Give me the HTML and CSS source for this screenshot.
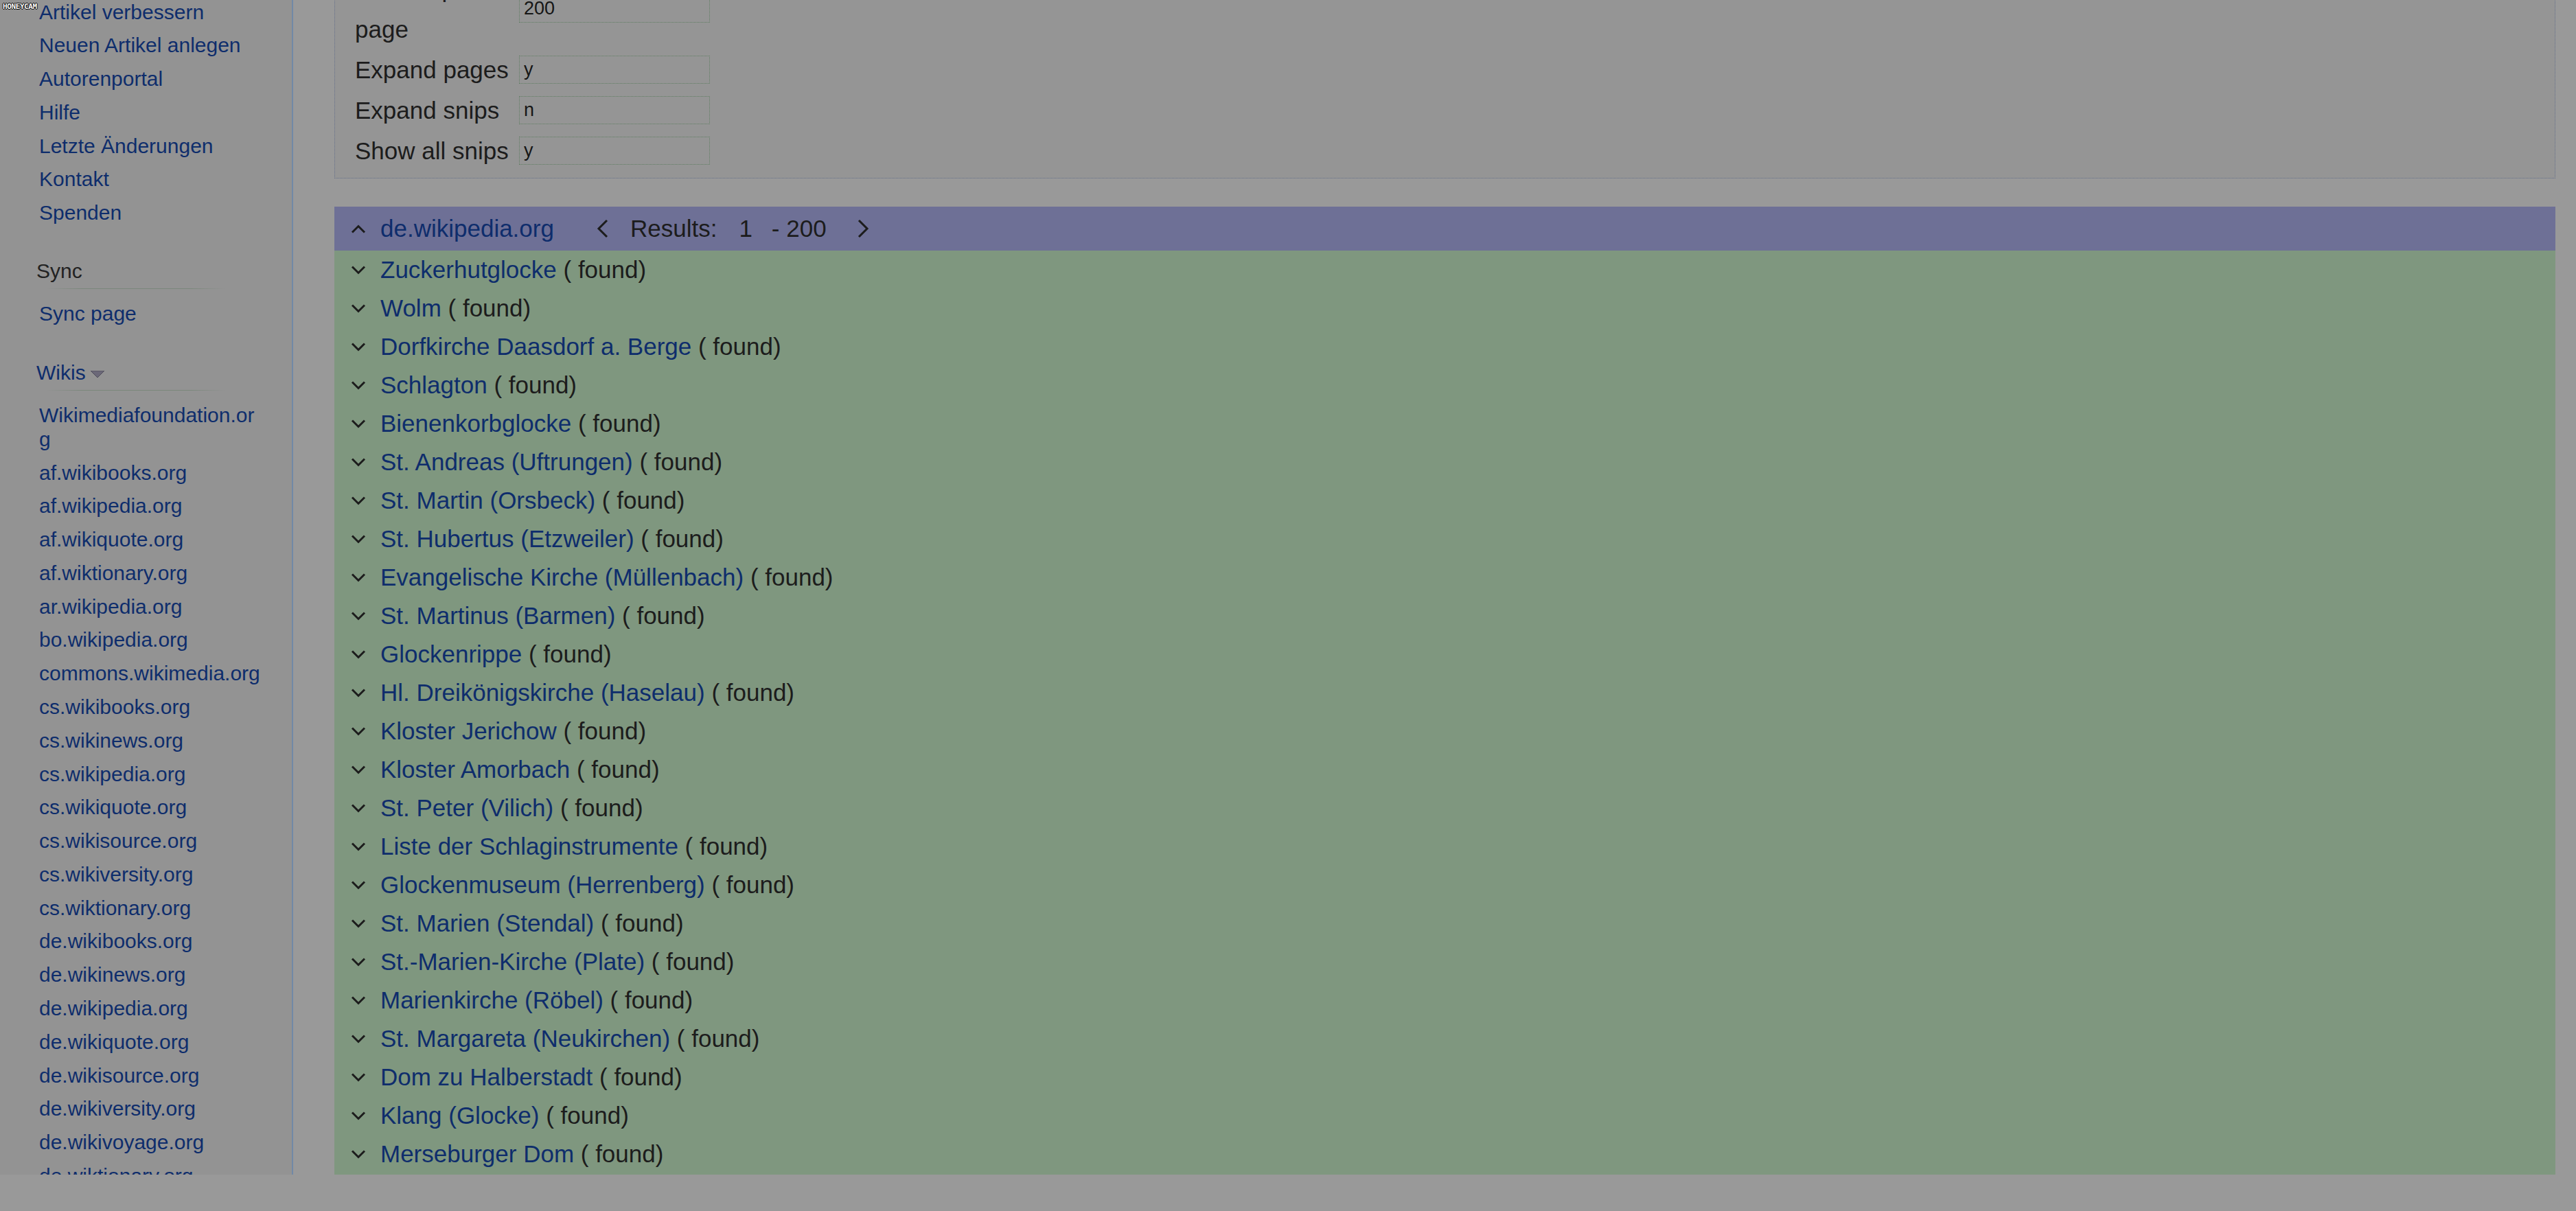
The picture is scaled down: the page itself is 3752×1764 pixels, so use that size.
FILE: index.html
```html
<!DOCTYPE html>
<html lang="de">
<head>
    <meta charset="UTF-8">
    <meta name="viewport" content="width=device-width, initial-scale=1.0">
    <title>Snips - Sync</title>
    <link rel="stylesheet" href="styles.css">
</head>
<body>
    <span class="watermark">HONEYCAM</span>
    <div class="page">
        <div class="sidebar">
            <ul class="nav-list first">
                <li><a href="#">Artikel verbessern</a></li>
                <li><a href="#">Neuen Artikel anlegen</a></li>
                <li><a href="#">Autorenportal</a></li>
                <li><a href="#">Hilfe</a></li>
                <li><a href="#">Letzte Änderungen</a></li>
                <li><a href="#">Kontakt</a></li>
                <li><a href="#">Spenden</a></li>
            </ul>
            <div class="portal">
                <h3>Sync</h3>
                <ul class="nav-list">
                    <li><a href="#">Sync page</a></li>
                </ul>
            </div>
            <div class="portal">
                <h3><a href="#">Wikis</a><svg class="drop" width="20" height="10" viewBox="0 0 20 10"><polygon points="0,0 20,0 10,10" fill="#6b6878" stroke="#4e4c5a" stroke-width="1"/></svg></h3>
                <ul class="nav-list">
                    <li><a href="#">Wikimediafoundation.org</a></li>
                    <li><a href="#">af.wikibooks.org</a></li>
                    <li><a href="#">af.wikipedia.org</a></li>
                    <li><a href="#">af.wikiquote.org</a></li>
                    <li><a href="#">af.wiktionary.org</a></li>
                    <li><a href="#">ar.wikipedia.org</a></li>
                    <li><a href="#">bo.wikipedia.org</a></li>
                    <li><a href="#">commons.wikimedia.org</a></li>
                    <li><a href="#">cs.wikibooks.org</a></li>
                    <li><a href="#">cs.wikinews.org</a></li>
                    <li><a href="#">cs.wikipedia.org</a></li>
                    <li><a href="#">cs.wikiquote.org</a></li>
                    <li><a href="#">cs.wikisource.org</a></li>
                    <li><a href="#">cs.wikiversity.org</a></li>
                    <li><a href="#">cs.wiktionary.org</a></li>
                    <li><a href="#">de.wikibooks.org</a></li>
                    <li><a href="#">de.wikinews.org</a></li>
                    <li><a href="#">de.wikipedia.org</a></li>
                    <li><a href="#">de.wikiquote.org</a></li>
                    <li><a href="#">de.wikisource.org</a></li>
                    <li><a href="#">de.wikiversity.org</a></li>
                    <li><a href="#">de.wikivoyage.org</a></li>
                    <li><a href="#">de.wiktionary.org</a></li>
                </ul>
            </div>
        </div>

        <div class="main">
            <div class="options">
                <table>
                    <tr>
                        <td class="label">Results per page</td>
                        <td><input type="text" value="200"></td>
                    </tr>
                    <tr>
                        <td class="label">Expand pages</td>
                        <td><input type="text" value="y"></td>
                    </tr>
                    <tr>
                        <td class="label">Expand snips</td>
                        <td><input type="text" value="n"></td>
                    </tr>
                    <tr>
                        <td class="label">Show all snips</td>
                        <td><input type="text" value="y"></td>
                    </tr>
                </table>
            </div>

            <div class="results">
                <div class="results-head">
                    <svg class="chev" width="22" height="13" viewBox="0 0 22 13"><polyline points="2,11.5 11,2.5 20,11.5" fill="none" stroke="#1c1c1c" stroke-width="3"/></svg>
                    <a href="#" class="site">de.wikipedia.org</a>
                    <svg class="pager prev" width="17" height="28" viewBox="0 0 17 28"><polyline points="15,2 3,14 15,26" fill="none" stroke="#1c1c1c" stroke-width="3"/></svg>
                    <span class="count-label">Results:</span>
                    <span class="count-from">1</span>
                    <span class="count-to">- 200</span>
                    <svg class="pager next" width="17" height="28" viewBox="0 0 17 28"><polyline points="2,2 14,14 2,26" fill="none" stroke="#1c1c1c" stroke-width="3"/></svg>
                </div>
                <ul class="result-list">
                    <li><svg class="chev" width="22" height="13" viewBox="0 0 22 13"><polyline points="2,1.5 11,10.5 20,1.5" fill="none" stroke="#1c1c1c" stroke-width="3"/></svg><a href="#">Zuckerhutglocke</a>&nbsp;( found)</li>
                    <li><svg class="chev" width="22" height="13" viewBox="0 0 22 13"><polyline points="2,1.5 11,10.5 20,1.5" fill="none" stroke="#1c1c1c" stroke-width="3"/></svg><a href="#">Wolm</a>&nbsp;( found)</li>
                    <li><svg class="chev" width="22" height="13" viewBox="0 0 22 13"><polyline points="2,1.5 11,10.5 20,1.5" fill="none" stroke="#1c1c1c" stroke-width="3"/></svg><a href="#">Dorfkirche Daasdorf a. Berge</a>&nbsp;( found)</li>
                    <li><svg class="chev" width="22" height="13" viewBox="0 0 22 13"><polyline points="2,1.5 11,10.5 20,1.5" fill="none" stroke="#1c1c1c" stroke-width="3"/></svg><a href="#">Schlagton</a>&nbsp;( found)</li>
                    <li><svg class="chev" width="22" height="13" viewBox="0 0 22 13"><polyline points="2,1.5 11,10.5 20,1.5" fill="none" stroke="#1c1c1c" stroke-width="3"/></svg><a href="#">Bienenkorbglocke</a>&nbsp;( found)</li>
                    <li><svg class="chev" width="22" height="13" viewBox="0 0 22 13"><polyline points="2,1.5 11,10.5 20,1.5" fill="none" stroke="#1c1c1c" stroke-width="3"/></svg><a href="#">St. Andreas (Uftrungen)</a>&nbsp;( found)</li>
                    <li><svg class="chev" width="22" height="13" viewBox="0 0 22 13"><polyline points="2,1.5 11,10.5 20,1.5" fill="none" stroke="#1c1c1c" stroke-width="3"/></svg><a href="#">St. Martin (Orsbeck)</a>&nbsp;( found)</li>
                    <li><svg class="chev" width="22" height="13" viewBox="0 0 22 13"><polyline points="2,1.5 11,10.5 20,1.5" fill="none" stroke="#1c1c1c" stroke-width="3"/></svg><a href="#">St. Hubertus (Etzweiler)</a>&nbsp;( found)</li>
                    <li><svg class="chev" width="22" height="13" viewBox="0 0 22 13"><polyline points="2,1.5 11,10.5 20,1.5" fill="none" stroke="#1c1c1c" stroke-width="3"/></svg><a href="#">Evangelische Kirche (Müllenbach)</a>&nbsp;( found)</li>
                    <li><svg class="chev" width="22" height="13" viewBox="0 0 22 13"><polyline points="2,1.5 11,10.5 20,1.5" fill="none" stroke="#1c1c1c" stroke-width="3"/></svg><a href="#">St. Martinus (Barmen)</a>&nbsp;( found)</li>
                    <li><svg class="chev" width="22" height="13" viewBox="0 0 22 13"><polyline points="2,1.5 11,10.5 20,1.5" fill="none" stroke="#1c1c1c" stroke-width="3"/></svg><a href="#">Glockenrippe</a>&nbsp;( found)</li>
                    <li><svg class="chev" width="22" height="13" viewBox="0 0 22 13"><polyline points="2,1.5 11,10.5 20,1.5" fill="none" stroke="#1c1c1c" stroke-width="3"/></svg><a href="#">Hl. Dreikönigskirche (Haselau)</a>&nbsp;( found)</li>
                    <li><svg class="chev" width="22" height="13" viewBox="0 0 22 13"><polyline points="2,1.5 11,10.5 20,1.5" fill="none" stroke="#1c1c1c" stroke-width="3"/></svg><a href="#">Kloster Jerichow</a>&nbsp;( found)</li>
                    <li><svg class="chev" width="22" height="13" viewBox="0 0 22 13"><polyline points="2,1.5 11,10.5 20,1.5" fill="none" stroke="#1c1c1c" stroke-width="3"/></svg><a href="#">Kloster Amorbach</a>&nbsp;( found)</li>
                    <li><svg class="chev" width="22" height="13" viewBox="0 0 22 13"><polyline points="2,1.5 11,10.5 20,1.5" fill="none" stroke="#1c1c1c" stroke-width="3"/></svg><a href="#">St. Peter (Vilich)</a>&nbsp;( found)</li>
                    <li><svg class="chev" width="22" height="13" viewBox="0 0 22 13"><polyline points="2,1.5 11,10.5 20,1.5" fill="none" stroke="#1c1c1c" stroke-width="3"/></svg><a href="#">Liste der Schlaginstrumente</a>&nbsp;( found)</li>
                    <li><svg class="chev" width="22" height="13" viewBox="0 0 22 13"><polyline points="2,1.5 11,10.5 20,1.5" fill="none" stroke="#1c1c1c" stroke-width="3"/></svg><a href="#">Glockenmuseum (Herrenberg)</a>&nbsp;( found)</li>
                    <li><svg class="chev" width="22" height="13" viewBox="0 0 22 13"><polyline points="2,1.5 11,10.5 20,1.5" fill="none" stroke="#1c1c1c" stroke-width="3"/></svg><a href="#">St. Marien (Stendal)</a>&nbsp;( found)</li>
                    <li><svg class="chev" width="22" height="13" viewBox="0 0 22 13"><polyline points="2,1.5 11,10.5 20,1.5" fill="none" stroke="#1c1c1c" stroke-width="3"/></svg><a href="#">St.-Marien-Kirche (Plate)</a>&nbsp;( found)</li>
                    <li><svg class="chev" width="22" height="13" viewBox="0 0 22 13"><polyline points="2,1.5 11,10.5 20,1.5" fill="none" stroke="#1c1c1c" stroke-width="3"/></svg><a href="#">Marienkirche (Röbel)</a>&nbsp;( found)</li>
                    <li><svg class="chev" width="22" height="13" viewBox="0 0 22 13"><polyline points="2,1.5 11,10.5 20,1.5" fill="none" stroke="#1c1c1c" stroke-width="3"/></svg><a href="#">St. Margareta (Neukirchen)</a>&nbsp;( found)</li>
                    <li><svg class="chev" width="22" height="13" viewBox="0 0 22 13"><polyline points="2,1.5 11,10.5 20,1.5" fill="none" stroke="#1c1c1c" stroke-width="3"/></svg><a href="#">Dom zu Halberstadt</a>&nbsp;( found)</li>
                    <li><svg class="chev" width="22" height="13" viewBox="0 0 22 13"><polyline points="2,1.5 11,10.5 20,1.5" fill="none" stroke="#1c1c1c" stroke-width="3"/></svg><a href="#">Klang (Glocke)</a>&nbsp;( found)</li>
                    <li><svg class="chev" width="22" height="13" viewBox="0 0 22 13"><polyline points="2,1.5 11,10.5 20,1.5" fill="none" stroke="#1c1c1c" stroke-width="3"/></svg><a href="#">Merseburger Dom</a>&nbsp;( found)</li>
                </ul>
            </div>
        </div>
    </div>
</body>
</html>
```

FILE: styles.css
```css
body {
    margin: 0;
    background: #999999;
    color: #1c1c1c;
    font-family: "Liberation Sans", Arial, sans-serif;
}
a {
    color: #0e2d6c;
    text-decoration: none;
}
ul {
    list-style: none;
    margin: 0;
    padding: 0;
}
.watermark {
    position: absolute;
    top: 3px;
    left: 4px;
    font: bold 11px "DejaVu Sans Mono", monospace;
    letter-spacing: -0.4px;
    color: #fff;
    text-shadow: 1px 0 #000, -1px 0 #000, 0 1px #000, 0 -1px #000;
}
.page {
    display: flex;
    height: 1711px;
    overflow: hidden;
}

/* sidebar */
.sidebar {
    flex-shrink: 0;
    background: #939393;
    border-right: 2px solid #7189a6;
    padding-left: 53px;
    box-sizing: border-box;
    width: 427px;
    overflow: hidden;
    font-size: 30px;
}
.nav-list {
    margin-left: 4px;
    width: 325px;
    padding-top: 10.2px;
}
.nav-list.first {
    margin-top: -7.4px;
    padding-top: 0;
}
.nav-list li {
    line-height: 35px;
    padding: 6.9px 0;
    overflow-wrap: anywhere;
}
.portal {
    margin-top: 43.3px;
}
.portal h3 {
    margin: 0;
    font-size: 30px;
    font-weight: normal;
    line-height: 35px;
    padding-bottom: 10px;
    color: #222;
    background: linear-gradient(to right, rgba(125, 140, 125, 0), #7a877b 20%, #7a877b 80%, rgba(125, 140, 125, 0)) no-repeat;
    background-size: 261px 1px;
    background-position: 14px calc(100% - 1px);
    display: flex;
    align-items: center;
}
.drop {
    margin-left: 7px;
    margin-top: 6px;
}

/* main column */
.main {
    flex: 1;
    padding: 0 30px 0 60px;
    font-size: 35px;
}
.options {
    margin-top: -57.5px;
    border: 1px dotted #66708a;
    background: #959595;
    padding: 10px 30px 10px 29px;
}
.options table {
    border-spacing: 0;
}
.options td {
    padding: 0;
    line-height: 59px;
    vertical-align: middle;
}
.options .label {
    width: 229px;
    padding-right: 10px;
}
.options input {
    display: block;
    width: 278px;
    height: 41px;
    box-sizing: border-box;
    border: 1px dotted #5f7d62;
    background: transparent;
    font-family: "Liberation Sans", Arial, sans-serif;
    font-size: 27px;
    color: #161616;
    padding: 0 6px;
    margin: 0;
}

.results {
    margin-top: 41.5px;
}
.results-head {
    display: flex;
    align-items: center;
    height: 64px;
    background: #6e7096;
    padding-left: 24px;
}
.chev {
    flex-shrink: 0;
    margin-right: 21px;
}
.results-head .site {
    margin-right: 62px;
}
.results-head .prev {
    margin-right: 32px;
}
.count-label {
    margin-right: 32px;
}
.count-from {
    margin-right: 28px;
}
.count-to {
    margin-right: 45px;
}
.result-list {
    background: #7f977f;
    padding-bottom: 10px;
}
.result-list li {
    display: flex;
    align-items: center;
    height: 56px;
    padding-left: 24px;
    white-space: pre;
}
```
